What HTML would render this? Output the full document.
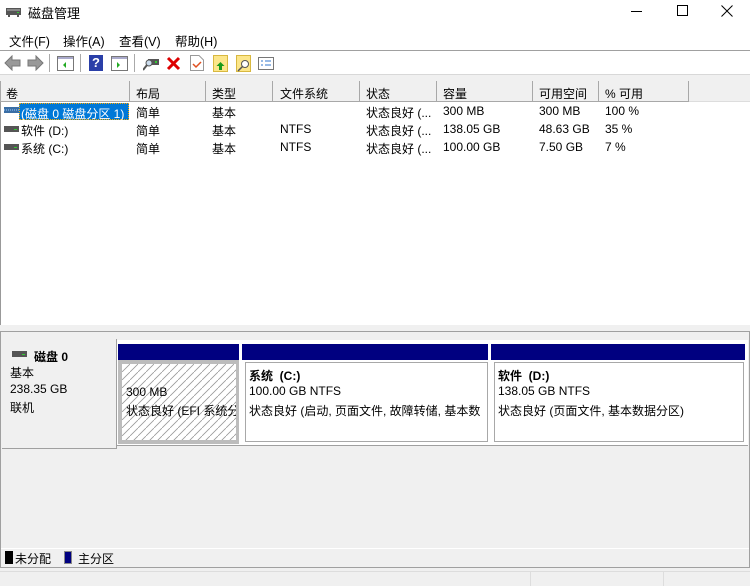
<!DOCTYPE html>
<html><head><meta charset="utf-8"><style>
*{margin:0;padding:0;box-sizing:border-box}
body{width:750px;height:586px;overflow:hidden;background:#f0f0f0;font-family:"Liberation Sans","Microsoft YaHei","Noto Sans CJK SC",sans-serif;font-size:12px;color:#000;position:relative}
.a{position:absolute}
.t{white-space:nowrap}
</style></head><body>
<!-- title bar -->
<div class="a" style="left:0;top:0;width:750px;height:50px;background:#fff"></div>
<svg class="a" style="left:6px;top:5px" width="16" height="12"><rect x="0" y="3" width="15" height="7" fill="#555"/><rect x="1" y="4" width="13" height="2" fill="#888"/><rect x="11" y="7" width="2" height="1" fill="#3c3"/><rect x="2" y="10" width="2" height="2" fill="#555"/><rect x="11" y="10" width="2" height="2" fill="#555"/></svg>
<div class="a t" style="left:28px;top:3px;font-size:13px">磁盘管理</div>
<div class="a" style="left:631px;top:11px;width:11px;height:1px;background:#000"></div>
<div class="a" style="left:677px;top:5px;width:11px;height:11px;border:1px solid #000"></div>
<svg class="a" style="left:721px;top:5px" width="12" height="12"><path d="M0.5 0.5L11.5 11.5M11.5 0.5L0.5 11.5" stroke="#000" stroke-width="1"/></svg>
<div class="a t" style="left:9px;top:31px;font-size:12.5px">文件(F)</div>
<div class="a t" style="left:63px;top:31px;font-size:12.5px">操作(A)</div>
<div class="a t" style="left:119px;top:31px;font-size:12.5px">查看(V)</div>
<div class="a t" style="left:175px;top:31px;font-size:12.5px">帮助(H)</div>
<div class="a" style="left:0;top:50px;width:750px;height:1px;background:#a0a0a0"></div>
<!-- toolbar -->
<div class="a" style="left:0;top:51px;width:750px;height:23px;background:#fff"></div>
<div class="a" style="left:0;top:74px;width:750px;height:1px;background:#d8d8d8"></div>
<svg class="a" style="left:4px;top:55px" width="40" height="16"><path d="M1 8L8 1V5H16V11H8V15Z" fill="#999" stroke="#777"/><path d="M39 8L32 1V5H24V11H32V15Z" fill="#999" stroke="#777"/></svg>
<div class="a" style="left:49px;top:54px;width:1px;height:18px;background:#aaa"></div>
<svg class="a" style="left:57px;top:56px" width="17" height="15"><rect x="0.5" y="0.5" width="16" height="14" fill="#fff" stroke="#777"/><rect x="1" y="1" width="15" height="2" fill="#aac"/><path d="M9 6v6l-3-3z" fill="#2a2"/></svg>
<div class="a" style="left:80px;top:54px;width:1px;height:18px;background:#aaa"></div>
<div class="a t" style="left:89px;top:55px;width:14px;height:16px;background:#2a3fa8;color:#fff;font-weight:bold;font-size:13px;text-align:center;line-height:16px">?</div>
<svg class="a" style="left:111px;top:56px" width="17" height="15"><rect x="0.5" y="0.5" width="16" height="14" fill="#fff" stroke="#777"/><rect x="1" y="1" width="15" height="2" fill="#aac"/><path d="M6 6v6l3-3z" fill="#2a2"/></svg>
<div class="a" style="left:134px;top:54px;width:1px;height:18px;background:#aaa"></div>
<svg class="a" style="left:143px;top:57px" width="17" height="14"><rect x="5" y="2" width="11" height="6" fill="#555"/><rect x="12" y="4" width="2" height="2" fill="#3c3"/><circle cx="6" cy="6" r="3" fill="#cde" stroke="#555"/><path d="M4 8L0 13" stroke="#555" stroke-width="2"/></svg>
<svg class="a" style="left:166px;top:56px" width="15" height="15"><path d="M2 2L13 13M13 2L2 13" stroke="#d00" stroke-width="3"/></svg>
<svg class="a" style="left:190px;top:55px" width="14" height="16"><path d="M0.5 0.5H9L13.5 5V15.5H0.5Z" fill="#fff" stroke="#999"/><path d="M3 9l3 3 5-5" stroke="#e05020" fill="none" stroke-width="1.5"/></svg>
<svg class="a" style="left:213px;top:55px" width="15" height="17"><rect x="0.5" y="0.5" width="14" height="16" fill="#fce68a" stroke="#d8b840"/><path d="M7.5 7l-4 4h2.5v4h3v-4h2.5z" fill="#1a9a1a"/></svg>
<svg class="a" style="left:236px;top:55px" width="15" height="17"><rect x="0.5" y="0.5" width="14" height="16" fill="#fce68a" stroke="#d8b840"/><circle cx="9" cy="9" r="3.5" fill="#fff" stroke="#555"/><path d="M6.5 11.5L2 16" stroke="#555" stroke-width="1.5"/></svg>
<svg class="a" style="left:258px;top:57px" width="16" height="13"><rect x="0.5" y="0.5" width="15" height="12" fill="#fff" stroke="#777"/><path d="M3 4h2M3 8h2M7 4h6M7 8h6" stroke="#37c"/></svg>
<!-- list -->
<div class="a" style="left:0;top:81px;width:750px;height:244px;background:#fff;border-left:1px solid #999"></div>
<div class="a" style="left:0;top:81px;width:750px;height:21px;background:#f0f0f0;border-bottom:1px solid #ddd"></div>
<div class="a" style="left:0;top:81px;width:750px;height:21px">
<div class="a" style="left:0;top:0;width:130px;height:21px;border:1px solid #a8a8a8;border-top:0;background:#f0f0f0"></div>
<div class="a" style="left:130px;top:0;width:76px;height:21px;border:1px solid #a8a8a8;border-top:0;border-left:0"></div>
<div class="a" style="left:206px;top:0;width:67px;height:21px;border:1px solid #a8a8a8;border-top:0;border-left:0"></div>
<div class="a" style="left:273px;top:0;width:87px;height:21px;border:1px solid #a8a8a8;border-top:0;border-left:0"></div>
<div class="a" style="left:360px;top:0;width:77px;height:21px;border:1px solid #a8a8a8;border-top:0;border-left:0"></div>
<div class="a" style="left:437px;top:0;width:96px;height:21px;border:1px solid #a8a8a8;border-top:0;border-left:0"></div>
<div class="a" style="left:533px;top:0;width:66px;height:21px;border:1px solid #a8a8a8;border-top:0;border-left:0"></div>
<div class="a" style="left:599px;top:0;width:90px;height:21px;border:1px solid #a8a8a8;border-top:0;border-left:0"></div>
</div>
<div class="a t" style="left:6px;top:85px">卷</div>
<div class="a t" style="left:136px;top:85px">布局</div>
<div class="a t" style="left:212px;top:85px">类型</div>
<div class="a t" style="left:280px;top:85px">文件系统</div>
<div class="a t" style="left:366px;top:85px">状态</div>
<div class="a t" style="left:443px;top:85px">容量</div>
<div class="a t" style="left:539px;top:85px">可用空间</div>
<div class="a t" style="left:605px;top:85px">% 可用</div>
<!-- rows -->
<svg class="a" style="left:4px;top:107px" width="15" height="6"><rect width="15" height="6" fill="#3a6ea5"/><path d="M0 3h15" stroke="#9cf" stroke-dasharray="1 1"/></svg>
<div class="a t" style="left:19px;top:103px;width:110px;height:17px;background:#0078d7;color:#fff;border:1px dotted #fa0;padding:1px 0 0 1px">(磁盘 0 磁盘分区 1)</div>
<div class="a t" style="left:136px;top:104px">简单</div><div class="a t" style="left:212px;top:104px">基本</div>
<div class="a t" style="left:366px;top:104px">状态良好 (...</div><div class="a t" style="left:443px;top:104px">300 MB</div><div class="a t" style="left:539px;top:104px">300 MB</div><div class="a t" style="left:605px;top:104px">100 %</div>
<svg class="a" style="left:4px;top:126px" width="15" height="6"><rect width="15" height="6" fill="#555"/><rect x="10" y="3" width="3" height="1" fill="#3c3"/></svg>
<div class="a t" style="left:21px;top:122px">软件 (D:)</div>
<div class="a t" style="left:136px;top:122px">简单</div><div class="a t" style="left:212px;top:122px">基本</div><div class="a t" style="left:280px;top:122px">NTFS</div>
<div class="a t" style="left:366px;top:122px">状态良好 (...</div><div class="a t" style="left:443px;top:122px">138.05 GB</div><div class="a t" style="left:539px;top:122px">48.63 GB</div><div class="a t" style="left:605px;top:122px">35 %</div>
<svg class="a" style="left:4px;top:144px" width="15" height="6"><rect width="15" height="6" fill="#555"/><rect x="10" y="3" width="3" height="1" fill="#3c3"/></svg>
<div class="a t" style="left:21px;top:140px">系统 (C:)</div>
<div class="a t" style="left:136px;top:140px">简单</div><div class="a t" style="left:212px;top:140px">基本</div><div class="a t" style="left:280px;top:140px">NTFS</div>
<div class="a t" style="left:366px;top:140px">状态良好 (...</div><div class="a t" style="left:443px;top:140px">100.00 GB</div><div class="a t" style="left:539px;top:140px">7.50 GB</div><div class="a t" style="left:605px;top:140px">7 %</div>
<!-- splitter -->
<div class="a" style="left:0;top:331px;width:750px;height:1px;background:#a0a0a0"></div>
<div class="a" style="left:0;top:332px;width:1px;height:236px;background:#a0a0a0"></div>
<div class="a" style="left:749px;top:332px;width:1px;height:236px;background:#a0a0a0"></div>
<!-- disk label -->
<div class="a" style="left:2px;top:339px;width:115px;height:110px;background:#f0f0f0;border-right:1px solid #a0a0a0;border-bottom:1px solid #a0a0a0"></div>
<svg class="a" style="left:12px;top:351px" width="15" height="6"><rect width="15" height="6" fill="#555"/><rect x="10" y="3" width="3" height="1" fill="#3c3"/></svg>
<div class="a t" style="left:34px;top:348px;font-weight:bold">磁盘 0</div>
<div class="a t" style="left:10px;top:364px">基本</div>
<div class="a t" style="left:10px;top:382px">238.35 GB</div>
<div class="a t" style="left:10px;top:399px">联机</div>
<!-- partitions -->
<div class="a" style="left:117px;top:340px;width:631px;height:106px;background:#fff;border-bottom:1px solid #a0a0a0"></div>
<div class="a" style="left:118px;top:344px;width:121px;height:16px;background:#000080"></div>
<div class="a" style="left:242px;top:344px;width:246px;height:16px;background:#000080"></div>
<div class="a" style="left:491px;top:344px;width:254px;height:16px;background:#000080"></div>
<div class="a" style="left:118px;top:360px;width:121px;height:84px;background:#bcbcbc"></div>
<svg class="a" style="left:122px;top:364px" width="114" height="76"><defs><pattern id="h" width="8" height="8" patternUnits="userSpaceOnUse"><path d="M0 8L8 0" stroke="#999" stroke-width="0.8"/></pattern></defs><rect width="114" height="76" fill="#fff"/><rect width="114" height="76" fill="url(#h)"/></svg>
<div class="a t" style="left:126px;top:385px;background:transparent">300 MB</div>
<div class="a t" style="left:126px;top:402px;width:110px;overflow:hidden">状态良好 (EFI 系统分</div>
<div class="a" style="left:245px;top:362px;width:243px;height:80px;border:1px solid #a8a8a8;background:#fff"></div>
<div class="a" style="left:494px;top:362px;width:250px;height:80px;border:1px solid #a8a8a8;background:#fff"></div>
<div class="a t" style="left:249px;top:367px;font-weight:bold">系统&nbsp; (C:)</div>
<div class="a t" style="left:249px;top:384px">100.00 GB NTFS</div>
<div class="a t" style="left:249px;top:402px;width:236px;overflow:hidden">状态良好 (启动, 页面文件, 故障转储, 基本数</div>
<div class="a t" style="left:498px;top:367px;font-weight:bold">软件&nbsp; (D:)</div>
<div class="a t" style="left:498px;top:384px">138.05 GB NTFS</div>
<div class="a t" style="left:498px;top:402px">状态良好 (页面文件, 基本数据分区)</div>
<!-- legend -->
<div class="a" style="left:1px;top:548px;width:748px;height:1px;background:#fff"></div>
<div class="a" style="left:0;top:567px;width:750px;height:1px;background:#a0a0a0"></div>
<div class="a" style="left:5px;top:551px;width:8px;height:13px;background:#000"></div>
<div class="a t" style="left:15px;top:550px">未分配</div>
<div class="a" style="left:64px;top:551px;width:8px;height:13px;background:#000080;border:1px solid #888"></div>
<div class="a t" style="left:78px;top:550px">主分区</div>
<div class="a" style="left:0;top:571px;width:750px;height:1px;background:#ddd"></div>
<div class="a" style="left:530px;top:572px;width:1px;height:14px;background:#ddd"></div>
<div class="a" style="left:663px;top:572px;width:1px;height:14px;background:#ddd"></div>
</body></html>
